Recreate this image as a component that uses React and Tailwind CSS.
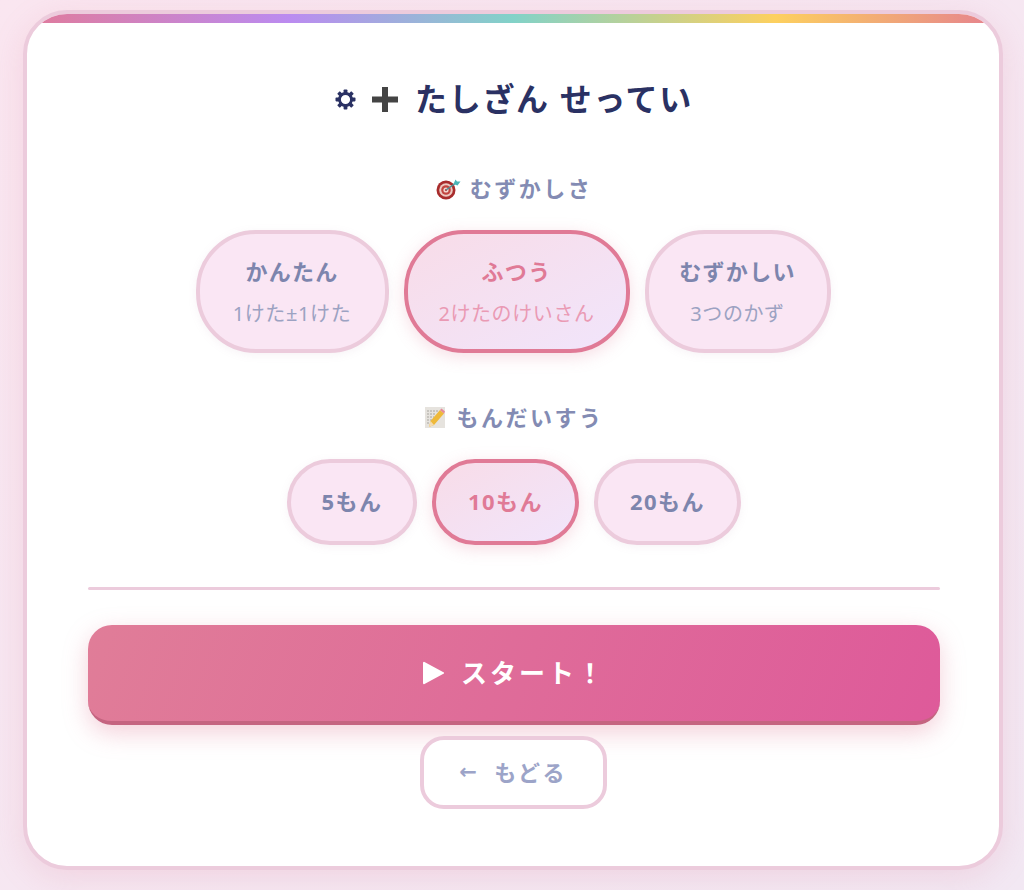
const font = { fontFamily: '"Noto Sans", "Noto Sans CJK JP", sans-serif' }

const GearIcon = () => (
  <svg width="21" height="21" viewBox="0 0 21 21" className="shrink-0">
    <g fill="#2a3163">
      {[0, 45, 90, 135, 180, 225, 270, 315].map((a) => (
        <rect key={a} x="8.600" y="0.500" width="3.800" height="5" rx="0.800" transform={`rotate(${a} 10.500 10.500)`} />
      ))}
    </g>
    <circle cx="10.500" cy="10.500" r="6" fill="none" stroke="#2a3163" strokeWidth="2.800" />
  </svg>
)

const DartIcon = () => (
  <svg width="25" height="23" viewBox="0 0 25 23" className="shrink-0">
    <circle cx="10" cy="13" r="9.500" fill="#a82c2c" />
    <circle cx="10" cy="13" r="6.800" fill="#edc9c0" />
    <circle cx="10" cy="13" r="4.800" fill="#c2453f" />
    <circle cx="10" cy="13" r="2.600" fill="#f0d3cc" />
    <circle cx="10" cy="13" r="1.100" fill="#b53232" />
    <path d="M10 13 L20 6" stroke="#4f8f95" strokeWidth="1.500" />
    <path d="M17.500 7 L19.500 2.500 L21 4.500 L24.500 4.500 L21.500 8.500 Z" fill="#49b5b8" />
  </svg>
)

const MemoIcon = () => (
  <svg width="22" height="23" viewBox="0 0 22 23" className="shrink-0">
    <rect x="1" y="1" width="20" height="21" fill="#e6e3de" />
    <path d="M3 5h12M3 8h9M3 11h7M3 14h5M3 17h4" stroke="#a9a6a0" strokeWidth="1" strokeDasharray="2 1" />
    <path d="M5 21 L6.500 15 L16 4 L20 7.500 L10 19 Z" fill="#eeb93a" />
    <path d="M5 21 L6.500 15 L10 19 Z" fill="#f3dcb5" />
    <path d="M16 4 L17.500 2.500 L21 5.500 L20 7.500 Z" fill="#e58a9a" />
  </svg>
)

const HeavyPlus = () => (
  <svg width="26" height="25" viewBox="0 0 26 25" className="shrink-0">
    <path d="M10 0h6v9.500H26v6H16V25h-6v-9.500H0v-6h10z" fill="#444444" />
  </svg>
)

const levels = [
  { title: 'かんたん', sub: '1けた±1けた', width: 'w-[193px]' },
  { title: 'ふつう', sub: '2けたのけいさん', width: 'w-[226px]', active: true },
  { title: 'むずかしい', sub: '3つのかず', width: 'w-[186px]' },
]

const counts = [
  { label: '5もん', width: 'w-[130px]' },
  { label: '10もん', width: 'w-[147px]', active: true },
  { label: '20もん', width: 'w-[147px]' },
]

const optionClass = (active) =>
  active
    ? 'border-[#e07a96] bg-gradient-to-br from-[#f8dce8] to-[#f1e5fb] shadow-[0_4px_16px_rgba(224,122,150,0.25)]'
    : 'border-[#eccbdc] bg-[#fae6f4] shadow-[0_2px_8px_rgba(180,140,170,0.1)]'

export default function App() {
  return (
    <div
      className="h-[890px] overflow-hidden bg-gradient-to-br from-[#fae6f0] to-[#f2e8f3] pt-[10px] pl-[23px]"
      style={font}
    >
      <div className="h-[860px] w-[980px] overflow-hidden rounded-[44px] border-4 border-[#eccbdc] bg-white shadow-[0_8px_32px_rgba(224,122,150,0.18)]">
        <div className="h-[9px] bg-[linear-gradient(90deg,#e07b9b_0%,#bb8bf0_27%,#82d2c8_50%,#fdd05f_77%,#e5818f_100%)]" />
        <div className="flex flex-col items-center pl-[61px] pr-[59px]">
          <h1 className="mt-[53px] flex h-[46px] items-center justify-center text-[32px] font-bold tracking-[1.700px] text-[#2a3163]">
            <span className="mr-[16px]"><GearIcon /></span>
            <span className="mr-[17px]"><HeavyPlus /></span>
            たしざん せってい
          </h1>

          <div className="mt-[50px] flex h-[32px] items-center gap-[9px] text-[22px] font-bold tracking-[2.500px] text-[#838bb3]">
            <DartIcon />
            むずかしさ
          </div>

          <div className="mt-[26px] mr-[2px] flex gap-[15px]">
            {levels.map((l) => (
              <button
                key={l.title}
                className={`flex h-[123px] ${l.width} flex-col items-center justify-center rounded-[60px] border-4 ${optionClass(l.active)}`}
              >
                <span className={`text-[22px] font-bold leading-[30px] tracking-[1.300px] ${l.active ? 'text-[#e07a96]' : 'text-[#7d85ad]'}`}>
                  {l.title}
                </span>
                <span className={`mt-[15px] text-[20px] leading-[26px] tracking-[0.600px] ${l.active ? 'text-[#ea9ab4]' : 'text-[#9ca2c2]'}`}>
                  {l.sub}
                </span>
              </button>
            ))}
          </div>

          <div className="mt-[48px] flex h-[32px] items-center gap-[10px] text-[22px] font-bold tracking-[2.500px] text-[#838bb3]">
            <MemoIcon />
            もんだいすう
          </div>

          <div className="mt-[26px] flex gap-[15px]">
            {counts.map((c) => (
              <button
                key={c.label}
                className={`h-[86px] ${c.width} rounded-[43px] border-4 pb-[2px] text-[22px] font-bold tracking-[1.500px] ${c.active ? 'text-[#e07a96]' : 'text-[#7d85ad]'} ${optionClass(c.active)}`}
              >
                {c.label}
              </button>
            ))}
          </div>

          <div className="mt-[42px] h-[3px] w-full rounded-full bg-[#eccbdc]" />

          <button className="mt-[35px] flex h-[100px] w-full items-center justify-center rounded-[24px] border-b-[4px] border-[#c56480] bg-[linear-gradient(110deg,#e07d98_0%,#de5a9a_100%)] text-[26px] font-bold tracking-[3px] text-white shadow-[0_8px_24px_rgba(224,122,150,0.35)]">
            <svg width="22" height="24" viewBox="0 0 22 24" className="mr-[17px]">
              <path d="M1 2 a1 1 0 0 1 1.500-1 L21 11 a1 1 0 0 1 0 2 L2.500 23 a1 1 0 0 1-1.500-1 Z" fill="#ffffff" />
            </svg>
            スタート！
          </button>

          <button className="mt-[11px] mr-[2px] flex h-[73px] w-[187px] items-center justify-center rounded-[24px] border-4 border-[#eccbdc] bg-white text-[22px] font-bold tracking-[2.300px] text-[#9ca4c8]">
            <span className="mr-[15px] text-[21px]" style={{ fontFamily: '"DejaVu Sans", sans-serif' }}>←</span>
            もどる
          </button>
        </div>
      </div>
    </div>
  )
}
